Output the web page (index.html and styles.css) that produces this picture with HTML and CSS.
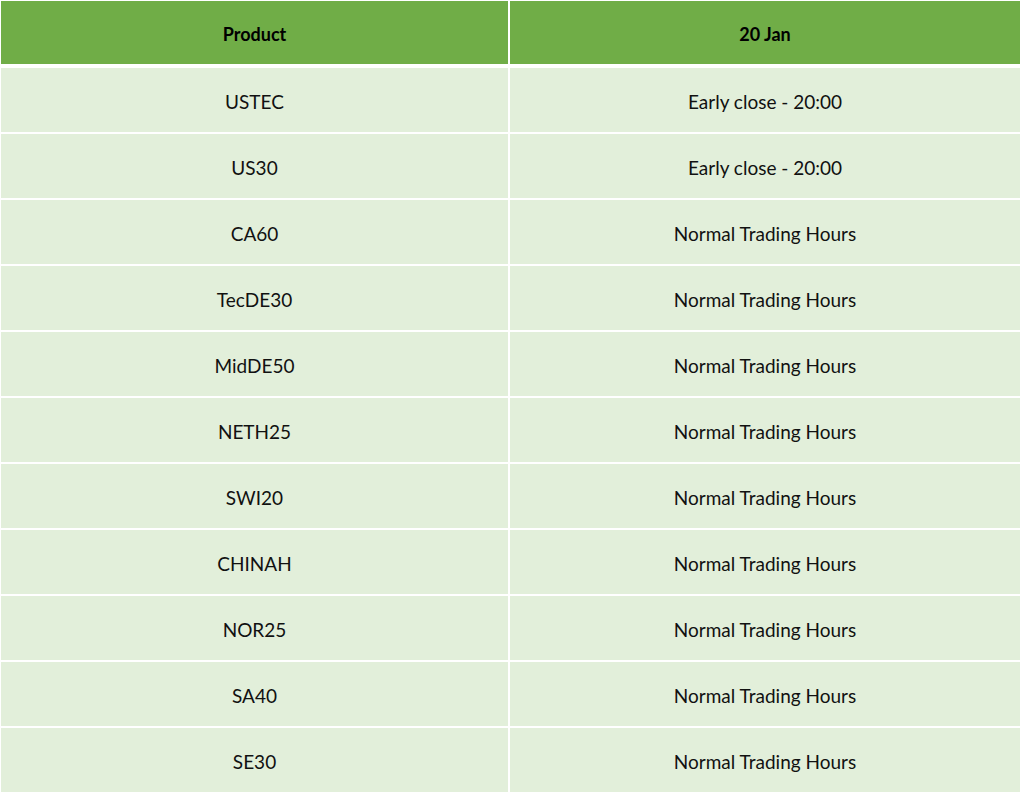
FILE: index.html
```html
<!DOCTYPE html>
<html>
<head>
<meta charset="utf-8">
<link rel="stylesheet" href="styles.css">
</head>
<body>
<div class="table">
  <div class="row head"><div class="cell">Product</div><div class="cell">20 Jan</div></div>
  <div class="row"><div class="cell">USTEC</div><div class="cell">Early close - 20:00</div></div>
  <div class="row"><div class="cell">US30</div><div class="cell">Early close - 20:00</div></div>
  <div class="row"><div class="cell">CA60</div><div class="cell">Normal Trading Hours</div></div>
  <div class="row"><div class="cell">TecDE30</div><div class="cell">Normal Trading Hours</div></div>
  <div class="row"><div class="cell">MidDE50</div><div class="cell">Normal Trading Hours</div></div>
  <div class="row"><div class="cell">NETH25</div><div class="cell">Normal Trading Hours</div></div>
  <div class="row"><div class="cell">SWI20</div><div class="cell">Normal Trading Hours</div></div>
  <div class="row"><div class="cell">CHINAH</div><div class="cell">Normal Trading Hours</div></div>
  <div class="row"><div class="cell">NOR25</div><div class="cell">Normal Trading Hours</div></div>
  <div class="row"><div class="cell">SA40</div><div class="cell">Normal Trading Hours</div></div>
  <div class="row"><div class="cell">SE30</div><div class="cell">Normal Trading Hours</div></div>
</div>
</body>
</html>
```
FILE: styles.css
```css
html, body {
  margin: 0;
  background: #ffffff;
}
body {
  padding: 1px 4px 0 1px;
  font-family: Lato, "Open Sans", sans-serif;
  font-size: 19px;
  color: #111;
}
.table {
  display: flex;
  flex-direction: column;
  gap: 2px;
  width: 1019px;
}
.row {
  display: grid;
  grid-template-columns: 507px 510px;
  column-gap: 2px;
  height: 64px;
}
.cell {
  background: #e2efda;
  display: flex;
  align-items: center;
  justify-content: center;
  padding-top: 2px;
  box-sizing: border-box;
}
.head {
  height: 63px;
  margin-bottom: 2px;
}
.head .cell {
  background: #70ad47;
  font-weight: bold;
  font-size: 18px;
  color: #000;
}
```
